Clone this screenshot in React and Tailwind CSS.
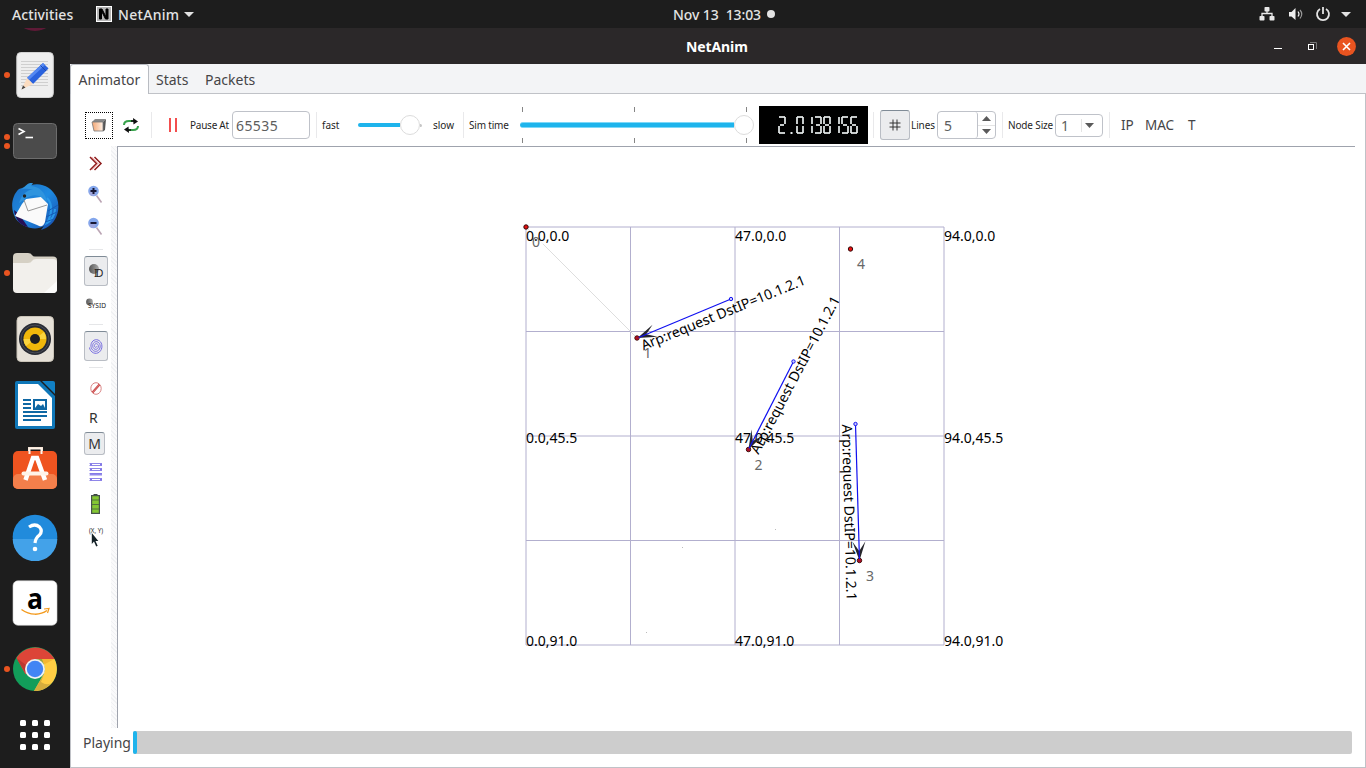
import React from "react";

const SEGMENTS = {
  0: "abcdef", 1: "bc", 2: "abged", 3: "abgcd", 5: "afgcd", 6: "afgedc", 8: "abcdefg",
};
const SEG_PATHS = {
  a: "M1 1H7", b: "M7 1V8", c: "M7 10V17", d: "M1 17H7", e: "M1 10V17", f: "M1 1V8", g: "M2 9H6",
};

function Lcd({ value }) {
  return (
    <div className="flex h-[38px] w-[109px] items-center justify-end bg-black pr-[9px]">
      {value.split("").map((ch, i) => (
        <svg key={i} className="h-[18px] w-[9px]" viewBox="0 0 9 18" fill="none" stroke="#e9eeee" strokeWidth="1.7">
          {ch === "." ? <path d="M3.5 17H5.5" strokeWidth="2" /> : SEGMENTS[ch].split("").map((s) => <path key={s} d={SEG_PATHS[s]} />)}
        </svg>
      ))}
    </div>
  );
}

function DockItem({ dots = 0, children }) {
  return (
    <div className="relative flex h-[66px] w-[70px] shrink-0 items-center justify-center">
      {dots > 0 && (
        <div className="absolute left-[4px] top-0 flex h-full flex-col items-center justify-center gap-[3px]">
          {Array.from({ length: dots }, (_, i) => <span key={i} className="size-[6px] rounded-full bg-[#e95420]" />)}
        </div>
      )}
      {children}
    </div>
  );
}

function Ic({ children }) {
  return <svg width="48" height="48" viewBox="0 0 48 48">{children}</svg>;
}

function Dock() {
  return (
    <div className="flex w-[70px] shrink-0 flex-col overflow-hidden bg-[#1d1d1d]">
      <svg className="h-[14px] w-[70px] shrink-0" viewBox="0 0 70 14"><circle cx="35" cy="-19" r="22" fill="#5e1a37" /></svg>
      <DockItem dots={1}>
        <Ic>
          <rect x="5.800" y="1.500" width="36.500" height="45" rx="4" fill="#eeeeee" stroke="#d2d2d2" strokeWidth="1" />
          <path d="M10 10.500H37M10 13.500H37M10 16.500H37M10 19.500H37M10 22.500H37M10 25.500H37M10 28.500H37M10 31.500H37M10 34.500H37" stroke="#cfcfcf" />
          <path d="M16 27L32 12L37.500 17.500L22 33Z" fill="#2a62dd" />
          <path d="M16 27L32 12L34 14L18 29Z" fill="#5488f2" />
          <path d="M16 27L22 33L10.500 38.500Z" fill="#fbdcc0" /><path d="M12 34.500L14.500 36.600L10.500 38.500Z" fill="#444" />
          <path d="M29.500 14.500L35 20" stroke="#1d49b0" />
        </Ic>
      </DockItem>
      <DockItem dots={2}>
        <Ic>
          <rect x="2.500" y="6.500" width="43" height="35" rx="4" fill="#4b4b4b" stroke="#6d6d6d" />
          <path d="M7.500 11.500L13 14.500L7.500 17.500" stroke="#fff" strokeWidth="1.600" fill="none" /><path d="M14.500 20.500H22" stroke="#fff" strokeWidth="1.600" />
        </Ic>
      </DockItem>
      <DockItem>
        <Ic>
          <defs>
            <linearGradient id="tb" x1="0" y1="0" x2="1" y2="1"><stop stopColor="#1c6fc4" /><stop offset=".5" stopColor="#1e8ae0" /><stop offset="1" stopColor="#1747a8" /></linearGradient>
          </defs>
          <path d="M20 2C30 -1 41 4 46 15C50 27 45 40 35 45L30 47L33 43C25 48 12 45 5 36C-1 27 0 13 8 6Z" fill="url(#tb)" />
          <path d="M3 27C4 37 10 43 17 44L8 31Z" fill="#241056" />
          <path d="M11 21L15 16L30 14L37 21L34 39C32 44 30 44 26 42L4 33Z" fill="#fafafa" />
          <path d="M13 17L17 28L36 22" fill="none" stroke="#999" strokeWidth="1" />
          <path d="M8 20C11 11 15 8 22 6C16 6 12 5 10 7C15 2 18 -1 22 0L20 3C29 4 34 9 36 19C31 13 25 11 20 13C14 15 13 17 8 20Z" fill="#2f94de" />
          <circle cx="13.500" cy="13" r="1.700" fill="#222" />
          <path d="M36 15C42 21 41 31 36 40C40 38 44 32 44 26" fill="none" stroke="#2998e8" strokeWidth="2" />
          <path d="M35 34L46 29M34 39L43 36M37 28L47 22" stroke="#145cb5" />
        </Ic>
      </DockItem>
      <DockItem dots={1}>
        <Ic>
          <path d="M2 8Q2 4 6 4H17Q20 4 21 6Q22 7.500 24 7.500H42Q46 7.500 46 11V20H2Z" fill="#d5d0c4" />
          <path d="M2 14H17Q20 14 21 12Q22 10 25 10H42Q46 10 46 13.500V40Q46 44 42 44H6Q2 44 2 40Z" fill="#f2f0ec" />
          <path d="M46 32L33 44H42Q46 44 46 40Z" fill="#fbfbfa" />
        </Ic>
      </DockItem>
      <DockItem>
        <Ic>
          <rect x="6" y="1.500" width="36.500" height="45" rx="4" fill="#e6e1d8" stroke="#cac4b8" />
          <circle cx="24" cy="24" r="16" fill="#282b33" /><circle cx="24" cy="24" r="14" fill="none" stroke="#4a4d57" />
          <circle cx="24" cy="24" r="11.500" fill="#f0b70b" /><path d="M24 24L33 17A11.500 11.500 0 0 1 35 24Z M24 24L15 31A11.500 11.500 0 0 1 12.500 24Z" fill="#fbd43e" />
          <circle cx="24" cy="24" r="5" fill="#1e1e22" />
        </Ic>
      </DockItem>
      <DockItem>
        <Ic>
          <path d="M6 0H29L44 15V46Q44 48 42 48H6Q4 48 4 46V2Q4 0 6 0Z" fill="#0f77b8" />
          <path d="M7 3H27L41 17V45H7Z" fill="#fff" /><path d="M31 0H42Q44 0 44 2V13Z" fill="#1180c4" />
          <path d="M12 19H20M12 23H20M12 27H20M12 31H36M12 35H36M12 39H30" stroke="#0f68a4" strokeWidth="2" />
          <rect x="23" y="19" width="12" height="9" fill="#fff" stroke="#0f68a4" strokeWidth="2" /><path d="M24 27L27 23L30 25L32 23L34 27Z" fill="#0f68a4" />
        </Ic>
      </DockItem>
      <DockItem>
        <Ic>
          <path d="M18 5V-1H31V5" transform="translate(0 2)" fill="none" stroke="#f0dccb" strokeWidth="2" />
          <rect x="2" y="4" width="44" height="38" rx="5" fill="#ef5420" /><rect x="2" y="27" width="44" height="15" rx="5" fill="#f47f4b" />
          <path d="M18.500 7V1.500H30.500V7" fill="none" stroke="#fff4e9" strokeWidth="2" />
          <path d="M14.500 33L22 11H26L34 33" fill="none" stroke="#fff" strokeWidth="4.500" />
          <path d="M12.500 26.500H35.500" stroke="#fff3e8" strokeWidth="4" strokeLinecap="round" />
        </Ic>
      </DockItem>
      <DockItem>
        <Ic>
          <circle cx="24" cy="24" r="22.300" fill="#218bdc" /><path d="M1.700 26H46.300A22.300 22.300 0 0 1 1.700 26Z" fill="#43a2e9" />
          <path d="M18 14Q24 10 28.500 14Q32 18 28.500 22Q24.500 25 24 30" fill="none" stroke="#fff" strokeWidth="3.200" /><circle cx="24" cy="36" r="2.300" fill="#fff" />
        </Ic>
      </DockItem>
      <DockItem>
        <Ic>
          <rect x="2" y="1.800" width="44" height="44.500" rx="5" fill="#fff" stroke="#d0d0d0" strokeWidth=".6" />
          <text x="16" y="30" fontFamily="Open Sans, sans-serif" fontWeight="700" fontSize="28" textLength="16" lengthAdjust="spacingAndGlyphs" fill="#000">a</text>
          <path d="M10.500 30.500C19 36.500 29 36.500 36 31.500" fill="none" stroke="#f39a1d" strokeWidth="1.500" /><path d="M33 30L38 29.500L36.500 34" fill="none" stroke="#f39a1d" strokeWidth="1.200" />
        </Ic>
      </DockItem>
      <DockItem dots={1}>
        <Ic>
          <circle cx="24" cy="24" r="22" fill="#129d5a" />
          <path d="M5.500 13A22 22 0 0 1 43.500 14H24L14.500 29.500Z" fill="#dc4538" />
          <path d="M43.500 14A22 22 0 0 1 23 46L32.700 29L34 24L31 14Z" fill="#ffce44" />
          <path d="M33 29L23 46Q33 47 40 38Q36 41 30 37Z" fill="#bf9b3a" opacity=".65" />
          <path d="M5.500 13L15 29L16.500 21Z" fill="#bd3830" /><path d="M24 14H43.500L34 19Z" fill="#eba929" opacity=".6" />
          <circle cx="24" cy="24" r="10" fill="#f1f1f1" /><circle cx="24" cy="24" r="8.200" fill="#4285f4" />
        </Ic>
      </DockItem>
      <DockItem>
        <div className="grid grid-cols-3 gap-[6px]">
          {Array.from({ length: 9 }, (_, i) => <span key={i} className="size-[6px] rounded-[1.500px] bg-white" />)}
        </div>
      </DockItem>
    </div>
  );
}

function TopBar() {
  return (
    <div className="flex h-7 w-full shrink-0 items-center bg-[#1d1d1d] text-[14px] font-medium text-[#e3e3e3]">
      <div className="ml-3 w-[84px] tracking-[0.1px]">Activities</div>
      <svg className="size-4" viewBox="0 0 16 16"><rect width="16" height="16" fill="#fff" /><rect x="1" y="1" width="14" height="14" fill="#b5b5b5" /><path d="M3.500 13V3H6L10 11V3H12V13H9.500L5.500 5V13Z" fill="#000" stroke="#000" /></svg>
      <div className="ml-[6px] w-[61px] tracking-[0.3px]">NetAnim</div>
      <svg className="ml-[5px] h-[5px] w-[10px]" viewBox="0 0 10 5"><path d="M0 0H10L5 5Z" fill="#e3e3e3" /></svg>
      <div className="ml-[479px] w-[91px] whitespace-pre tracking-[-0.1px]">Nov 13  13:03</div>
      <span className="ml-[3px] size-2 rounded-full bg-[#e3e3e3]" />
      <svg className="ml-auto h-[14px] w-4" viewBox="0 0 16 14" fill="#e8e8e8"><rect x="5.500" width="5" height="4.500" rx=".8" /><rect x=".5" y="9" width="5" height="4.500" rx=".8" /><rect x="10.500" y="9" width="5" height="4.500" rx=".8" /><path d="M8 4V6.500M3 9V6.500H13V9" fill="none" stroke="#e8e8e8" strokeWidth="1.300" /></svg>
      <svg className="ml-[13px] h-[14px] w-4" viewBox="0 0 16 14" fill="none"><path d="M1 5H3.500L7.500 1V13L3.500 9.500H1Z" fill="#eee" /><path d="M10 4.500Q12 7 10 9.500" stroke="#eee" strokeWidth="1.200" /><path d="M12 3Q15.500 7 12 11.500" stroke="#999" strokeWidth="1.200" /></svg>
      <svg className="ml-[11px] size-[16px]" viewBox="0 0 16 16" fill="none" stroke="#e3e3e3" strokeWidth="1.800"><path d="M5 3A6 6 0 1 0 11 3M8 1V8" /></svg>
      <svg className="ml-[10px] mr-[15px] h-[5px] w-[10px]" viewBox="0 0 10 5"><path d="M0 0H10L5 5Z" fill="#e3e3e3" /></svg>
    </div>
  );
}

function TitleBar() {
  return (
    <div className="flex h-9 shrink-0 items-center bg-[#2b2829]">
      <div className="ml-[616px] w-[64px] text-[14px] font-bold tracking-[-0.1px] text-white">NetAnim</div>
      <svg className="ml-auto h-3 w-[8px]" viewBox="0 0 8 12"><path d="M0 8.500H8" stroke="#fff" /></svg>
      <svg className="ml-[26px] size-[9px]" viewBox="0 0 9 9" fill="none"><path d="M2 .5H8.500V7" stroke="#777" /><rect x=".5" y="2.500" width="5" height="5" stroke="#fff" /></svg>
      <svg className="ml-[20px] mr-[10px] size-[19px]" viewBox="0 0 19 19"><circle cx="9.500" cy="9.500" r="9.400" fill="#e95420" /><path d="M6 6L13 13M13 6L6 13" stroke="#fff" strokeWidth="1.600" /></svg>
    </div>
  );
}

function Tabs() {
  return (
    <div className="flex h-[30px] shrink-0 bg-[#f3f4f6] text-[14px] text-[#454547]">
      <div className="flex h-[30px] w-[79px] items-center justify-center rounded-t-[3px] border-x border-t border-[#b9bcc2] bg-white tracking-[0.05px]">Animator</div>
      <div className="flex flex-1 items-center border-b border-[#c0c2c7] pt-[2px]">
        <span className="ml-[7px] w-[49px]">Stats</span>
        <span>Packets</span>
      </div>
    </div>
  );
}

const Sep = () => <span className="h-[26px] w-px shrink-0 bg-[#e9e9eb]" />;

function Toolbar() {
  return (
    <div className="flex h-[52px] shrink-0 items-center pt-[10px] text-[10px] text-[#1f1f1f]">
      <div className="ml-[14px] flex h-[27px] w-[28px] items-center justify-center border border-dotted border-black">
        <svg className="h-[13px] w-[16px]" viewBox="0 0 16 13">
          <defs><linearGradient id="cube"><stop stopColor="#f4a673" /><stop offset="1" stopColor="#fff0e4" /></linearGradient></defs>
          <path d="M1 3L4 0H15L12 3Z" fill="#888" /><path d="M12 3L15 0L14 11L12 12.500Z" fill="#555" /><path d="M1 3H12V12H3Z" fill="url(#cube)" stroke="#777" strokeWidth=".8" />
        </svg>
      </div>
      <svg className="ml-[10px] h-[17px] w-4" viewBox="0 0 16 17" fill="none" strokeWidth="2">
        <path d="M1 8Q1 4 6 4H11" stroke="#38a34c" /><path d="M15 9Q15 13 10 13H5" stroke="#38a34c" /><path d="M10 1L15 4.500L10.500 7.500Z" fill="#111" stroke="none" /><path d="M6 16L1 12.500L5.500 9.500Z" fill="#111" stroke="none" /><path d="M8 4H12M8 13H4" stroke="#111" strokeWidth="1.600" />
      </svg>
      <span className="ml-[12px] flex"><Sep /></span>
      <svg className="ml-[17px] h-[14px] w-2" viewBox="0 0 8 14"><path d="M1 0V14M7 0V14" stroke="#f01414" strokeWidth="1.500" /></svg>
      <span className="ml-[13px] w-[42px] whitespace-nowrap tracking-[-0.25px]">Pause At</span>
      <div className="flex h-[28px] w-[78px] items-center rounded-[4px] border border-[#bfc2c9] pl-[3px] text-[14px] tracking-[0.4px] text-[#5d5d5d]">65535</div>
      <span className="ml-[6px] flex"><Sep /></span>
      <span className="ml-[5px] w-[36px]">fast</span>
      <div className="flex w-[64px] items-center">
        <span className="h-[3.500px] w-[42px] rounded-l-full bg-[#1eb4ec]" />
        <span className="size-5 shrink-0 rounded-full border border-[#dcdcdc] bg-white" />
        <span className="h-[3px] w-[2px] rounded-r bg-[#c6c6c6]" />
      </div>
      <span className="ml-[11px] w-[30px]">slow</span>
      <Sep />
      <span className="ml-[5px] w-[51px] whitespace-nowrap tracking-[-0.2px]">Sim time</span>
      <div className="flex w-[234px] flex-col">
        <div className="flex justify-between pl-[2px] pr-[7px]"><span className="h-[5px] w-px bg-[#858585]" /><span className="h-[5px] w-px bg-[#858585]" /><span className="h-[5px] w-px bg-[#858585]" /></div>
        <div className="my-[3px] flex h-5 items-center">
          <span className="h-[6px] flex-1 rounded-l-full border-y border-[#7ed8f8] bg-[#1eb4ec]" />
          <span className="size-5 rounded-full border border-[#dcdcdc] bg-white" />
        </div>
        <div className="flex justify-between pl-[2px] pr-[7px]"><span className="h-[5px] w-px bg-[#858585]" /><span className="h-[5px] w-px bg-[#858585]" /><span className="h-[5px] w-px bg-[#858585]" /></div>
      </div>
      <div className="ml-[5px]"><Lcd value="2.0138156" /></div>
      <span className="ml-[5px] flex"><Sep /></span>
      <div className="ml-[6px] flex h-[30px] w-[30px] items-center justify-center rounded-[3px] border border-[#b9bdc4] border-t-[#7f8b96] bg-[#ebecee]">
        <svg className="size-3" viewBox="0 0 12 12"><path d="M4 .5V11.500M8 .5V11.500M.5 4H11.500M.5 8H11.500" stroke="#333" /></svg>
      </div>
      <span className="ml-[1px] w-[26px] tracking-[-0.1px]">Lines</span>
      <div className="flex h-[28px] w-[59px] rounded-[4px] border border-[#bfc2c9] text-[14px] text-[#5d5d5d]">
        <span className="flex w-[40px] items-center rounded-r-[3px] border-r border-[#bfc2c9] pl-[6px]">5</span>
        <span className="flex flex-1 flex-col items-center justify-evenly">
          <svg className="h-[5px] w-[9px]" viewBox="0 0 9 5"><path d="M0 5H9L4.500 0Z" fill="#5a5a5a" /></svg>
          <span className="h-px w-full bg-[#e4e4e4]" />
          <svg className="h-[5px] w-[9px]" viewBox="0 0 9 5"><path d="M0 0H9L4.500 5Z" fill="#5a5a5a" /></svg>
        </span>
      </div>
      <span className="ml-[6px] flex"><Sep /></span>
      <span className="ml-[5px] w-[47px] whitespace-nowrap tracking-[-0.15px]">Node Size</span>
      <div className="flex h-[23px] w-[48px] items-center rounded-[4px] border border-[#bfc2c9] pl-[5px] text-[14px] text-[#5d5d5d]">
        <span className="w-[20px]">1</span><span className="h-[13px] w-px bg-[#e4e4e4]" />
        <svg className="ml-[3px] h-[5px] w-[9px]" viewBox="0 0 9 5"><path d="M0 0H9L4.500 5Z" fill="#5a5a5a" /></svg>
      </div>
      <span className="ml-[6px] flex"><Sep /></span>
      <div className="ml-[11px] flex text-[13.500px] text-[#454547]">
        <span className="w-[24px]">IP</span><span className="w-[43px]">MAC</span><span>T</span>
      </div>
    </div>
  );
}

function Magnifier({ plus }) {
  return (
    <svg className="h-[18px] w-4 shrink-0" viewBox="0 0 16 18">
      <path d="M9.500 10.500L14.500 17.500" stroke="#bba5b4" strokeWidth="1.600" /><circle cx="6.500" cy="6" r="5.300" fill="#83a6ec" /><circle cx="5.500" cy="8" r="3" fill="#aaa6d8" opacity=".7" />
      <path d={plus ? "M3.500 6H9.500M6.500 3V9" : "M3.500 6H9.500"} stroke="#171735" strokeWidth="2" />
    </svg>
  );
}

function SideSep() {
  return <span className="ml-[18px] h-px w-[14px] shrink-0 bg-[#e5e6e8]" />;
}

function SideTools() {
  const spiral = Array.from({ length: 90 }, (_, i) => {
    const a = i * 0.245, r = 0.7 + i * 0.068;
    return `${i ? "L" : "M"}${(7 + r * Math.cos(a)).toFixed(2)} ${(8 + r * 1.15 * Math.sin(a)).toFixed(2)}`;
  }).join("");
  return (
    <div className="flex h-[582px] w-[40px] shrink-0 flex-col text-[14px] text-[#333]">
      <svg className="ml-[18px] mt-[10px] h-[15px] w-[14px] shrink-0" viewBox="0 0 14 15" fill="none"><path d="M1 1L7.500 7.500L1 14M5.500 1L12 7.500L5.500 14" stroke="#8f1d1d" strokeWidth="1.500" /><path d="M2.500 1L9 7.500L2.500 14" stroke="#e06a6a" strokeWidth=".8" /></svg>
      <div className="ml-[16px] mt-[14px] flex"><Magnifier plus /></div>
      <div className="ml-[16px] mt-[14px] flex"><Magnifier /></div>
      <div className="mt-[14px] flex"><SideSep /></div>
      <div className="ml-[13px] mt-[6px] h-[30px] w-[24px] shrink-0 rounded-[3px] border border-[#b9bdc4] border-t-[#7f8b96] bg-[#ebecee]">
        <svg className="h-[28px] w-[22px]" viewBox="0 0 22 28"><defs><linearGradient id="ball"><stop stopColor="#555" /><stop offset="1" stopColor="#aaa" /></linearGradient></defs><circle cx="9" cy="12" r="5" fill="url(#ball)" /><text x="9" y="20" fontSize="10.500" fill="#222" textLength="9.500">ID</text></svg>
      </div>
      <svg className="ml-[14px] mt-[8px] h-[18px] w-6 shrink-0" viewBox="0 0 24 18"><circle cx="4.500" cy="8" r="3.400" fill="url(#ball)" /><text x="3" y="13.500" fontSize="7" fill="#222" textLength="18" lengthAdjust="spacingAndGlyphs">SYSID</text></svg>
      <div className="mt-[12px] flex"><SideSep /></div>
      <div className="ml-[13px] mt-[6px] flex h-[30px] w-[24px] shrink-0 items-center justify-center rounded-[3px] border border-[#b9bdc4] border-t-[#7f8b96] bg-[#ebecee]">
        <svg className="h-4 w-[14px]" viewBox="0 0 14 16" fill="none"><path d={spiral} stroke="#786ee0" strokeWidth="1" /></svg>
      </div>
      <div className="mt-[6px] flex"><SideSep /></div>
      <svg className="ml-[19px] mt-[14px] h-[13px] w-[12px] shrink-0" viewBox="0 0 12 13" fill="none"><ellipse cx="6" cy="6.500" rx="5.200" ry="5.800" stroke="#d98383" strokeWidth="1" /><path d="M2.500 10.500L9.500 2.500" stroke="#c54141" strokeWidth="2" /><path d="M2.500 10.500L9.500 2.500" stroke="#f4b0b0" strokeWidth=".5" /></svg>
      <span className="ml-[18px] mt-[13px] h-[20px] shrink-0 leading-[20px]">R</span>
      <div className="ml-[13px] mt-[4px] flex h-[23px] w-[21px] shrink-0 items-center justify-center rounded-[3px] border border-[#b9bdc4] border-t-[#7f8b96] bg-[#ebecee]">M</div>
      <svg className="ml-[18px] mt-[7px] h-[20px] w-[14px] shrink-0" viewBox="0 0 14 20" fill="#d7d3fa" stroke="#8278e6"><path d="M.5 1.500H13M.5 3.500H13M.5 6.500H13M.5 8.500H13M.5 11.500H13M.5 13H13M.5 16.500H13M.5 18.500H13" strokeWidth=".9" /><path d="M1 2.500H3M11 2.500H13M1 7.500H3M11 7.500H13M1 12H13M1 17.500H3M11 17.500H13" strokeWidth="1.500" /></svg>
      <svg className="ml-[20px] mt-[12px] h-[20px] w-[9px] shrink-0" viewBox="0 0 9 20"><rect x="2.500" y="0" width="4" height="2" fill="#3c4840" /><rect x=".6" y="1.600" width="7.800" height="17.800" fill="#84c733" stroke="#46534b" strokeWidth="1.200" /><path d="M1 6H8M1 10.500H8M1 15H8" stroke="#53743d" /></svg>
      <svg className="ml-[17px] mt-[11px] h-[22px] w-4 shrink-0" viewBox="0 0 16 22"><text x="1" y="7.500" fontSize="7" fill="#222" textLength="14" lengthAdjust="spacingAndGlyphs">(X, Y)</text><path d="M3.800 8V19L6 16.500L8.200 21.500L9.700 20.700L7.500 16H10.300Z" fill="#142127" /></svg>
    </div>
  );
}

const PACKETS = [
  { from: [731, 299], to: [637.5, 338], label: [643.5, 350.5], turn: -22.2 },
  { from: [793.5, 361.5], to: [748.5, 449.5], label: [758.5, 455], turn: -62.2 },
  { from: [855.5, 424], to: [859.5, 560.5], label: [842, 424.500], turn: 88.5 },
];
const NODES = [
  [526, 227, 532, 246.500], [637, 338, 643.5, 358], [748.5, 449.5, 754.5, 470], [859.5, 560.5, 866, 581], [850.5, 249, 857, 269],
];
const LABEL_X = [[526, "0.0"], [735, "47.0"], [944, "94.0"]];
const LABEL_Y = [[241, "0.0"], [443, "45.5"], [646, "91.0"]];

function Canvas() {
  return (
    <svg className="block h-[581px] w-[1237px]" viewBox="118 147 1237 581" fontFamily="Noto Sans, sans-serif" fontSize="14">
      <g stroke="#b2afce" strokeWidth="1">
        {[526, 630.5, 735, 839.5, 944].map((x) => <path key={x} d={`M${x} 227V645`} />)}
        {[227, 331.5, 436, 540.5, 645].map((y) => <path key={y} d={`M526 ${y}H944`} />)}
      </g>
      <path d="M526 227L637 338" stroke="#dedede" />
      <rect x="530" y="231" width="13" height="17" fill="#fff" opacity=".7" />
      {NODES.map(([x, y, tx, ty], i) => (
        <g key={i}><circle cx={x} cy={y} r="2.200" fill="#e81010" stroke="#310a0a" /><text x={tx} y={ty} fill="#686868">{i}</text></g>
      ))}
      {LABEL_Y.map(([y, b]) => LABEL_X.map(([x, a]) => <text key={a + b} x={x} y={y} fill="#000">{`${a},${b}`}</text>))}
      {PACKETS.map((p, i) => {
        const ang = (Math.atan2(p.from[1] - p.to[1], p.from[0] - p.to[0]) * 180) / Math.PI;
        return (
          <g key={i}>
            <path d="M0 0L19 -6.500L9.500 0L19 6.500Z" fill="#25252b" transform={`translate(${p.to[0]} ${p.to[1]}) rotate(${ang})`} />
            <path d={`M${p.from[0]} ${p.from[1]}L${p.to[0]} ${p.to[1]}`} stroke="#1010f0" strokeWidth="1.200" />
            <circle cx={p.from[0]} cy={p.from[1]} r="1.700" fill="#c8c8ff" stroke="#1515f0" />
            <circle cx={p.to[0]} cy={p.to[1]} r="1.500" fill="#a01030" />
            <text x="0" y="0" fill="#000" textLength="176" lengthAdjust="spacingAndGlyphs" transform={`translate(${p.label[0]} ${p.label[1]}) rotate(${p.turn})`}>Arp:request DstIP=10.1.2.1</text>
          </g>
        );
      })}
      <path d="M775 529.500h1M682 547.500h1M646 632.500h1" stroke="#bbb" />
    </svg>
  );
}

export default function App() {
  return (
    <div className="flex h-[768px] w-[1366px] flex-col overflow-hidden bg-white font-['Noto_Sans','Open_Sans',sans-serif]">
      <TopBar />
      <div className="flex h-[740px]">
        <Dock />
        <div className="flex w-[1296px] flex-col">
          <TitleBar />
          <Tabs />
          <div className="flex h-[674px] flex-col border-x border-b border-[#c0c2c7] bg-white">
            <Toolbar />
            <div className="flex h-[582px]">
              <SideTools />
              <div className="h-full w-[6px] bg-[repeating-linear-gradient(45deg,#f0f1f3_0,#f0f1f3_1px,#fafafb_1px,#fafafb_3px)]" />
              <div className="border-l border-t border-[#9fa3ad]"><Canvas /></div>
            </div>
            <div className="flex h-[24px] items-center pl-3 pt-[5px] text-[14px] text-[#454547]">
              <span className="w-[50px]">Playing</span>
              <div className="flex h-[23px] w-[1219px] rounded-[2px] bg-[#cdcdcd]"><span className="w-[4px] rounded-[2px] bg-[#1eb4ec]" /></div>
            </div>
          </div>
        </div>
      </div>
    </div>
  );
}
